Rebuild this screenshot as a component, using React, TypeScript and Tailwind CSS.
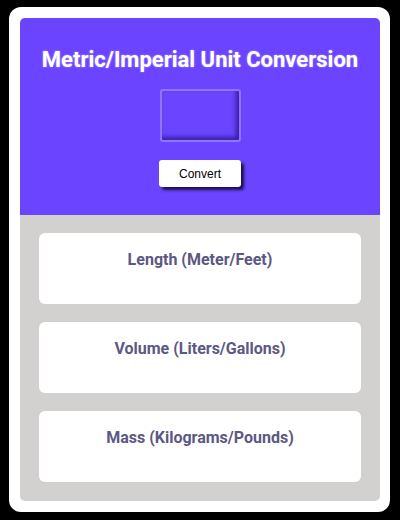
const units = ['Length (Meter/Feet)', 'Volume (Liters/Gallons)', 'Mass (Kilograms/Pounds)'];

export default function App() {
  return (
    <div className="min-h-screen bg-black pt-[7px] pl-[9px] font-['Roboto',sans-serif]">
      <div className="w-[381px] rounded-[12px] bg-white p-[11px] pr-[10px]">
        <div className="overflow-hidden rounded-[5px]">
          <section className="flex flex-col items-center bg-[#6a44fe] pt-[29px] pb-[28px]">
            <h1 className="text-[22px] leading-[26px] font-bold text-white [text-shadow:0_0_2px_rgba(255,255,255,0.5)]">
              Metric/Imperial Unit Conversion
            </h1>
            <input
              type="text"
              className="mt-[16px] h-[53px] w-[81px] rounded-[3px] border-2 border-[#8f75ff] bg-[#6a44fe] shadow-[inset_-3px_-3px_4px_rgba(20,0,90,0.55)] outline-none"
            />
            <button className="mt-[18px] h-[27px] w-[82px] rounded-[3px] bg-white font-['Liberation_Sans',Arial,sans-serif] text-[12px] text-black shadow-[3px_3px_3px_rgba(20,10,60,0.9)]">
              Convert
            </button>
          </section>
          <section className="flex flex-col gap-[18px] bg-[#d2d1cf] px-[19px] pt-[18px] pb-[19px]">
            {units.map((u) => (
              <div key={u} className="h-[71px] rounded-[6px] bg-white pt-[17px] text-center">
                <h2 className="text-[16px] leading-[20px] font-bold text-[#5c5883]">{u}</h2>
              </div>
            ))}
          </section>
        </div>
      </div>
    </div>
  );
}
